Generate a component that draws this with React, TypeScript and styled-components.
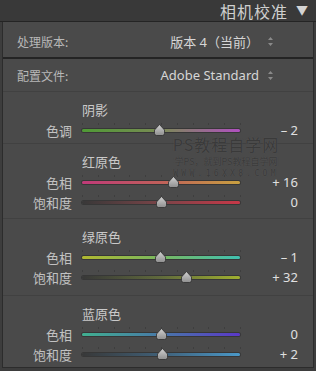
import styled, { createGlobalStyle } from 'styled-components'

const GlobalStyle = createGlobalStyle`
  html, body {
    margin: 0;
    padding: 0;
    background: #3d3d3d;
  }
  body {
    width: 316px;
    height: 371px;
    overflow: hidden;
    font-family: 'Noto Sans', 'Noto Sans CJK SC', sans-serif;
  }
`

const Page = styled.div`
  width: 316px;
  height: 371px;
  background: #3d3d3d;
`

const Header = styled.div`
  height: 21px;
  display: flex;
  align-items: center;
  justify-content: flex-end;
  padding-right: 8px;
  background: #393939;
  border-bottom: 1px solid #242424;
`

const Title = styled.span`
  font-family: 'Noto Sans CJK SC', sans-serif;
  font-size: 16px;
  line-height: 20px;
  color: #cfcfcf;
  letter-spacing: 1px;
`

const Caret = styled.span`
  margin-left: 8px;
  font-size: 12px;
  line-height: 20px;
  color: #d4d4d4;
`

const Panel = styled.div`
  position: relative;
  box-sizing: border-box;
  width: 312px;
  margin-left: 2px;
  background: #4a4a4a;
  border-left: 1px solid #2c2c2c;
  border-right: 1px solid #2c2c2c;
  border-bottom: 1px solid #2c2c2c;
`

const SelectRow = styled.div<{ $h: number; $pt?: number }>`
  box-sizing: border-box;
  height: ${(p) => p.$h}px;
  padding: ${(p) => p.$pt ?? 0}px 40px 0 14px;
  display: flex;
  align-items: center;
`

const SelectLabel = styled.span`
  flex: 1;
  font-family: 'Noto Sans CJK SC', sans-serif;
  font-size: 12px;
  color: #b8b8b8;
`

const SelectValue = styled.span`
  font-size: 13px;
  color: #d6d6d6;
`

const Spinner = styled.svg`
  margin-left: 9px;
  width: 5px;
  height: 9px;
`

const DarkRule = styled.div`
  height: 2px;
  background: #242424;
`

const Section = styled.div<{ $pb: number }>`
  border-top: 1px solid #414141;
  padding: 7px 0 ${(p) => p.$pb}px;
`

const Heading = styled.div`
  height: 21px;
  line-height: 21px;
  padding-left: 79px;
  font-family: 'Noto Sans CJK SC', sans-serif;
  font-size: 13px;
  color: #c9c9c9;
`

const Row = styled.div`
  height: 20px;
  display: flex;
  align-items: center;
`

const RowLabel = styled.span`
  width: 69px;
  text-align: right;
  font-family: 'Noto Sans CJK SC', sans-serif;
  font-size: 13px;
  color: #c2c2c2;
`

const TrackBox = styled.div`
  position: relative;
  width: 158px;
  height: 20px;
  margin-left: 10px;
  display: flex;
  align-items: center;
`

const Track = styled.div<{ $bg: string }>`
  position: relative;
  width: 100%;
  height: 3px;
  border-radius: 2px;
  background: ${(p) => p.$bg};
  box-shadow: 0 0 0 1px rgba(0, 0, 0, 0.25);

  &::before {
    content: '';
    position: absolute;
    left: 0;
    right: -1px;
    top: -6px;
    height: 2px;
    background: repeating-linear-gradient(
      to right,
      #3e3e3e 0 1px,
      transparent 1px 15.8px
    );
  }
`

const Thumb = styled.svg`
  position: absolute;
  top: 4px;
  width: 11px;
  height: 12px;
  margin-left: -5.5px;
`

const Value = styled.span`
  flex: 1;
  text-align: right;
  padding-right: 15px;
  font-size: 13px;
  color: #e0e0e0;
  white-space: pre;
`

const Watermark = styled.div`
  position: absolute;
  left: 165px;
  top: 111px;
  width: 116px;
  display: flex;
  flex-direction: column;
  align-items: center;
  white-space: nowrap;
  font-family: 'Noto Sans CJK SC', sans-serif;
  color: #3a3a3a;
  text-shadow: 0 0 1px #5c5c5c;
  pointer-events: none;
`

const MarkTitle = styled.span`
  font-size: 16px;
  line-height: 23px;
  letter-spacing: 1px;
`

const MarkSub = styled.span`
  font-size: 9px;
  line-height: 12px;
`

const MarkUrl = styled.span`
  font-family: 'DejaVu Sans Mono', monospace;
  font-size: 8px;
  line-height: 11px;
  letter-spacing: 3.3px;
`

type SliderProps = { label: string; value: number; text: string; bg: string }

function Slider({ label, value, text, bg }: SliderProps) {
  return (
    <Row>
      <RowLabel>{label}</RowLabel>
      <TrackBox>
        <Track $bg={bg} />
        <Thumb viewBox='0 0 11 12' style={{ left: `${50 + value / 2}%` }}>
          <defs>
            <linearGradient id='tg' x1='0' y1='0' x2='0' y2='1'>
              <stop offset='0' stopColor='#d2d2d2' />
              <stop offset='1' stopColor='#8e8e8e' />
            </linearGradient>
          </defs>
          <path
            d='M5.5 0.5 L10.5 6 L10.5 9.5 Q10.5 11.5 8.5 11.5 L2.5 11.5 Q0.5 11.5 0.5 9.5 L0.5 6 Z'
            fill='url(#tg)'
            stroke='#2e2e2e'
            strokeWidth='0.8'
          />
        </Thumb>
      </TrackBox>
      <Value>{text}</Value>
    </Row>
  )
}

function Arrows() {
  return (
    <Spinner viewBox='0 0 5 9'>
      <path d='M2.5 0 L5 3 L0 3 Z M2.5 9 L5 6 L0 6 Z' fill='#8a8a8a' />
    </Spinner>
  )
}

export default function App() {
  return (
    <Page>
      <GlobalStyle />
      <Header>
        <Title>相机校准</Title>
        <Caret>▼</Caret>
      </Header>
      <Panel>
        <SelectRow $h={35} $pt={3}>
          <SelectLabel>处理版本:</SelectLabel>
          <SelectValue>版本 4（当前）</SelectValue>
          <Arrows />
        </SelectRow>
        <DarkRule />
        <SelectRow $h={32}>
          <SelectLabel>配置文件:</SelectLabel>
          <SelectValue>Adobe Standard</SelectValue>
          <Arrows />
        </SelectRow>

        <Section $pb={3}>
          <Heading>阴影</Heading>
          <Slider label='色调' value={-2} text='– 2' bg='linear-gradient(to right, #4f9a35, #7a8a55 50%, #b050c0)' />
        </Section>

        <Section $pb={6}>
          <Heading>红原色</Heading>
          <Slider label='色相' value={16} text='+ 16' bg='linear-gradient(to right, #c03a78, #c0605a 50%, #c8a040)' />
          <Slider label='饱和度' value={0} text='0' bg='linear-gradient(to right, #383838, #7a4448 50%, #c83848)' />
        </Section>

        <Section $pb={8}>
          <Heading>绿原色</Heading>
          <Slider label='色相' value={-1} text='– 1' bg='linear-gradient(to right, #b0b830, #78b860 50%, #40c0b0)' />
          <Slider label='饱和度' value={32} text='+ 32' bg='linear-gradient(to right, #383838, #606a3c 50%, #a0b030)' />
        </Section>

        <Section $pb={3}>
          <Heading>蓝原色</Heading>
          <Slider label='色相' value={0} text='0' bg='linear-gradient(to right, #40b090, #4878a8 50%, #5a38c8)' />
          <Slider label='饱和度' value={2} text='+ 2' bg='linear-gradient(to right, #383838, #406078 50%, #4a98c8)' />
        </Section>

        <Watermark>
          <MarkTitle>PS教程自学网</MarkTitle>
          <MarkSub>学PS，就到PS教程自学网</MarkSub>
          <MarkUrl>WWW.16XX8.COM</MarkUrl>
        </Watermark>
      </Panel>
    </Page>
  )
}
